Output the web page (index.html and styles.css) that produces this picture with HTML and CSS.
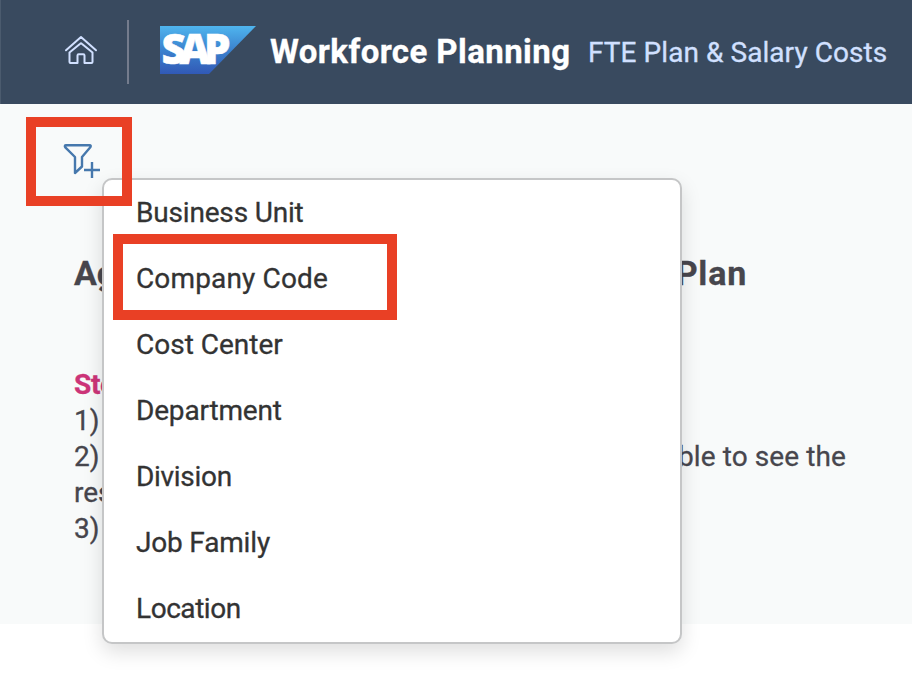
FILE: index.html
```html
<!DOCTYPE html>
<html lang="en">
<head>
<meta charset="utf-8">
<title>Workforce Planning</title>
<link rel="stylesheet" href="styles.css">
</head>
<body>
<header class="shell">
  <svg class="home" width="34" height="30" viewBox="0 0 34 30" aria-hidden="true">
    <path d="M2 15.300 17 2l15 13.300M5.500 17.500V27q0 1 1 1h7v-7.500q0-1.200 1.200-1.200h4.600q1.200 0 1.200 1.200V28h7q1 0 1-1v-9.500L17.800 8.700q-.8-.7-1.600 0z"/>
  </svg>
  <div class="divider"></div>
  <svg class="logo" width="96" height="48" viewBox="0 0 96 48" role="img">
    <defs><linearGradient id="sky" x1="0" y1="0" x2="0" y2="1">
      <stop offset="0" stop-color="#4fb5ee"/><stop offset=".5" stop-color="#3b82ce"/><stop offset="1" stop-color="#3159b6"/>
    </linearGradient></defs>
    <path fill="url(#sky)" d="M0 0h96L49 48H0z"/>
    <text class="logo-text" x="1.500" y="38" textLength="69" lengthAdjust="spacing">SAP</text>
  </svg>
  <h1 class="title">Workforce Planning</h1>
  <span class="subtitle">FTE Plan &amp; Salary Costs</span>
</header>
<main class="content">
  <button class="filter" aria-label="Add filter">
    <svg width="40" height="40" viewBox="0 0 40 40">
      <path d="M5 5.300h23.500q2 0 .8 2L21 17v9.500L14 33V17L4.300 7.300q-1.200-2 .7-2z"/>
      <path d="M23 30h16M31 22v16"/>
    </svg>
  </button>
  <h2 class="heading"><span>Ag</span><span class="plan">Plan</span></h2>
  <div class="steps">
    <div class="step-title">Ste</div>
    <div>1)</div>
    <div class="split"><span>2)</span><span class="tail">ble to see the</span></div>
    <div>res</div>
    <div>3)</div>
  </div>
</main>
<ul class="menu">
  <li class="tight">Business Unit</li>
  <li class="marked">Company Code</li>
  <li>Cost Center</li>
  <li class="tight">Department</li>
  <li class="tighter">Division</li>
  <li class="tight">Job Family</li>
  <li class="tightest">Location</li>
</ul>
<div class="filter-mark"></div>
</body>
</html>
```
FILE: styles.css
```css
* { box-sizing: border-box; }
body { margin: 0; height: 682px; overflow: hidden; background: #fff; font-family: Roboto, "Open Sans", sans-serif; font-size: 28px; color: #47464d; position: relative; }
.shell { height: 104px; background: #394a5f; border-left: 1px solid #4b5b6e; display: flex; align-items: center; padding-left: 63px; white-space: nowrap; }
.home { margin-top: -4px; fill: none; stroke: #d1e0ff; stroke-width: 2; stroke-linecap: round; stroke-linejoin: round; }
.divider { width: 2px; height: 64px; margin: 0 31px 0 29px; background: #747c8d; }
.logo { margin-top: -4px; flex: none; overflow: visible; }
.logo-text { font: 800 42px "Open Sans", sans-serif; fill: #fff; stroke: #fff; stroke-width: .5; }
.title { margin: 0 0 0 14px; width: 318px; font-size: 33px; letter-spacing: .42px; line-height: 40px; font-weight: 700; color: #fff; -webkit-text-stroke: .3px; }
.subtitle { color: #d1e0ff; line-height: 40px; letter-spacing: .06px; margin-top: 2px; -webkit-text-stroke: .3px; }
.content { height: 520px; background: #f8fafa; padding: 36px 66px 0 74px; }
.filter { display: block; width: 40px; height: 40px; margin-left: -13px; padding: 0; border: 0; background: none; }
.filter svg { display: block; fill: none; stroke: #4678ad; stroke-width: 2.400; stroke-linejoin: round; }
.heading { display: flex; justify-content: space-between; width: 673px; margin: 73px 0 0; font-size: 34px; line-height: 40px; font-weight: 700; -webkit-text-stroke: .3px; }
.plan { letter-spacing: .8px; }
.steps { margin-top: 74px; line-height: 36px; -webkit-text-stroke: .3px; }
.step-title { color: #cc3478; font-weight: 700; letter-spacing: -.3px; }
.split { display: flex; justify-content: space-between; }
.tail { letter-spacing: .1px; }
.menu { position: absolute; left: 102px; top: 178px; width: 580px; height: 466px; margin: 0; padding: 0; list-style: none; background: #fff; border: 2px solid #c5c6c7; border-radius: 10px; box-shadow: 0 8px 20px rgba(0,0,0,.13); color: #333; }
.menu li { position: relative; height: 66px; padding: 0 0 2px 32px; display: flex; align-items: center; letter-spacing: 0; -webkit-text-stroke: .3px; }
.menu .marked { letter-spacing: .15px; }
.menu .tight { letter-spacing: -.18px; }
.menu .tighter { letter-spacing: -.3px; }
.menu .tightest { letter-spacing: -.45px; }
.marked::before { content: ""; position: absolute; box-sizing: border-box; left: 9px; top: -12px; width: 284px; height: 86px; border: 10px solid #e94025; }
.filter-mark { position: absolute; left: 26px; top: 117px; width: 106px; height: 89px; border: 10px solid #e94025; }
```
